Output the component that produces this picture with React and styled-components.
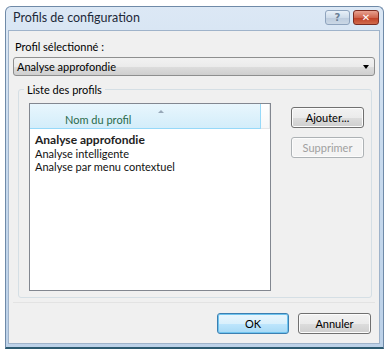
import styled, { createGlobalStyle } from "styled-components";

const Global = createGlobalStyle`
    body {
        margin: 0;
        background: #fff;
        font-family: Lato, "Open Sans", sans-serif;
        font-size: 11px;
        color: #000;
    }
`

const Fenetre = styled.div`
    margin: 6px 0 0 5px;
    width: 379px;
    height: 343px;
    box-sizing: border-box;
    border: 1px solid #6f8aa8;
    border-bottom: 2px solid #2c5a70;
    border-radius: 6px 6px 0 0;
    background: linear-gradient(180deg, #dce8f5 0%, #c9dbee 40%, #bcd1e8 100%);
    display: flex;
    flex-direction: column;
    padding: 0 3px 3px 2px;
`

const BarreTitre = styled.div`
    height: 23px;
    display: flex;
    align-items: center;
    padding-left: 5px;
    font-size: 12.5px;
    color: #1e2a3a;
`

const Titre = styled.span`
    flex: 1;
    margin-top: -2px;
`

const BoutonsTitre = styled.div`
    display: flex;
    gap: 3px;
    margin-top: -3px;
    margin-right: 1px;
`

const BoutonTitre = styled.div`
    width: ${p => p.$w}px;
    height: 15px;
    box-sizing: border-box;
    border: 1px solid ${p => p.$close ? '#7a2c22' : '#8ea3bd'};
    border-radius: 3px;
    background: ${p => p.$close
        ? 'linear-gradient(180deg, #e8a190 0%, #d0664f 50%, #bf3d24 51%, #d06a4c 100%)'
        : 'linear-gradient(180deg, #e8f0f8 0%, #cfdcea 50%, #bccbdd 51%, #cbd8e6 100%)'};
    display: flex;
    align-items: center;
    justify-content: center;
    color: ${p => p.$close ? '#fff' : '#6b7f96'};
    font-family: "DejaVu Sans", sans-serif;
    font-size: 10px;
    font-weight: bold;
`

const Client = styled.div`
    flex: 1;
    background: #f0f0f0;
    border: 1px solid #9fb3ca;
    display: flex;
    flex-direction: column;
    padding: 0 4px;
`

const Etiquette = styled.div`
    margin: 8px 0 0 2px;
    height: 15px;
    line-height: 15px;
`

const Combo = styled.div`
    margin-top: 3px;
    height: 19px;
    box-sizing: border-box;
    border: 1px solid #8e8f8f;
    border-radius: 3px;
    background: linear-gradient(180deg, #f2f2f2 0%, #ebebeb 50%, #dddddd 51%, #cfcfcf 100%);
    display: flex;
    align-items: center;
    padding: 0 5px 0 3px;
`

const ComboTexte = styled.span`
    flex: 1;
`

const Fleche = styled.span`
    width: 0;
    height: 0;
    border-left: 3.5px solid transparent;
    border-right: 3.5px solid transparent;
    border-top: 4px solid #000;
`

const Groupe = styled.div`
    position: relative;
    margin: 13px 3px 0 5px;
    padding: 13px 7px 6px 10px;
    border: 1px solid #d5dfe5;
    border-radius: 3px;
    height: 209px;
    box-sizing: border-box;
    display: flex;
    gap: 20px;
`

const Legende = styled.span`
    position: absolute;
    top: -8px;
    left: 5px;
    padding: 0 3px;
    line-height: 15px;
    background: #f0f0f0;
`

const Liste = styled.div`
    width: 243px;
    box-sizing: border-box;
    border: 1px solid #828790;
    background: #fff;
    display: flex;
    flex-direction: column;
`

const Entete = styled.div`
    display: flex;
    height: 25px;
    flex-shrink: 0;
`

const Colonne = styled.div`
    width: 231px;
    position: relative;
    background: linear-gradient(180deg, #e8f6fd 0%, #d3edfa 100%);
    border-right: 1px solid #96d9f9;
    border-bottom: 1px solid #96d9f9;
    color: #2a6a4a;
    display: flex;
    align-items: flex-end;
    padding: 0 0 1px 35px;
    line-height: 14px;
    box-sizing: border-box;
`

const Tri = styled.span`
    position: absolute;
    top: 6px;
    left: 128px;
    width: 0;
    height: 0;
    border-left: 3px solid transparent;
    border-right: 3px solid transparent;
    border-bottom: 3px solid #97a8b8;
`

const ColonneVide = styled.div`
    flex: 1;
    background: linear-gradient(180deg, #ffffff 0%, #f6f7f8 100%);
    border-bottom: 1px solid #e4e6e8;
    border-right: 1px solid #e4e6e8;
`

const Ligne = styled.div`
    padding-left: 5px;
    height: 13.5px;
    line-height: 13.5px;
    font-size: ${p => p.$gras ? '12px' : '11px'};
    font-weight: ${p => p.$gras ? 700 : 400};
    color: ${p => p.$gras ? '#222' : '#111'};
    margin-top: ${p => p.$gras ? '4px' : '0'};
`

const Actions = styled.div`
    display: flex;
    flex-direction: column;
    gap: 9px;
    padding-top: 4px;
`

const Bouton = styled.button`
    width: ${p => p.$w || 73}px;
    height: 21px;
    box-sizing: border-box;
    border: 1px solid ${p => p.$focus ? '#3c7fb1' : p.disabled ? '#adb2b5' : '#707070'};
    border-radius: 3px;
    background: ${p => p.disabled
        ? '#f4f4f4'
        : p.$focus
            ? 'linear-gradient(180deg, #eaf6fd 0%, #d9f0fc 50%, #bee6fd 51%, #a7d9f5 100%)'
            : 'linear-gradient(180deg, #f2f2f2 0%, #ebebeb 50%, #dddddd 51%, #cfcfcf 100%)'};
    box-shadow: ${p => p.$focus ? 'inset 0 0 0 1px #6fc4ef' : 'inset 0 0 0 1px #fcfcfc'};
    font-family: inherit;
    font-size: 11px;
    color: ${p => p.disabled ? '#a0a0a0' : '#000'};
    padding: 0;
`

const Pied = styled.div`
    margin-top: auto;
    border-top: 1px solid #e3e3e3;
    display: flex;
    justify-content: flex-end;
    gap: 9px;
    padding: 10px 4px 9px 0;
`

function App() {
    const profils = ['Analyse intelligente', 'Analyse par menu contextuel']

    return (
        <>
            <Global />
            <Fenetre>
                <BarreTitre>
                    <Titre>Profils de configuration</Titre>
                    <BoutonsTitre>
                        <BoutonTitre $w={25}>?</BoutonTitre>
                        <BoutonTitre $w={26} $close>✕</BoutonTitre>
                    </BoutonsTitre>
                </BarreTitre>
                <Client>
                    <Etiquette>Profil sélectionné :</Etiquette>
                    <Combo>
                        <ComboTexte>Analyse approfondie</ComboTexte>
                        <Fleche />
                    </Combo>
                    <Groupe>
                        <Legende>Liste des profils</Legende>
                        <Liste>
                            <Entete>
                                <Colonne>Nom du profil<Tri /></Colonne>
                                <ColonneVide />
                            </Entete>
                            <Ligne $gras>Analyse approfondie</Ligne>
                            {profils.map(p => <Ligne key={p}>{p}</Ligne>)}
                        </Liste>
                        <Actions>
                            <Bouton>Ajouter...</Bouton>
                            <Bouton disabled>Supprimer</Bouton>
                        </Actions>
                    </Groupe>
                    <Pied>
                        <Bouton $focus $w={72}>OK</Bouton>
                        <Bouton>Annuler</Bouton>
                    </Pied>
                </Client>
            </Fenetre>
        </>
    )
}

export default App;
